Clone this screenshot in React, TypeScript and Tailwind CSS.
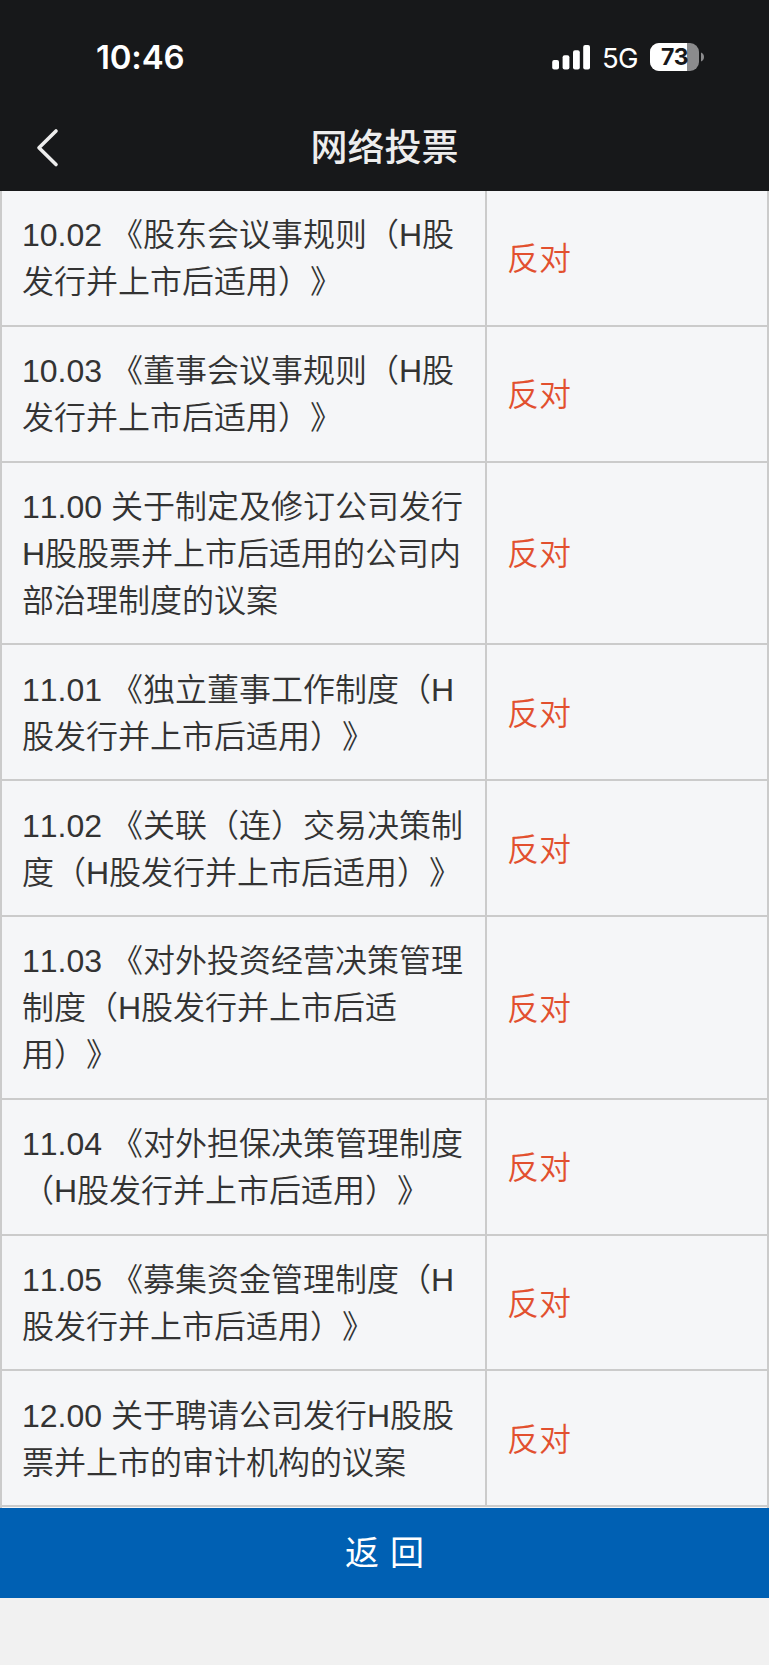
const rows = [
  { lines: ['10.02 《股东会议事规则（H股', '发行并上市后适用）》'], vote: '反对' },
  { lines: ['10.03 《董事会议事规则（H股', '发行并上市后适用）》'], vote: '反对' },
  { lines: ['11.00 关于制定及修订公司发行', 'H股股票并上市后适用的公司内', '部治理制度的议案'], vote: '反对' },
  { lines: ['11.01 《独立董事工作制度（H', '股发行并上市后适用）》'], vote: '反对' },
  { lines: ['11.02 《关联（连）交易决策制', '度（H股发行并上市后适用）》'], vote: '反对' },
  { lines: ['11.03 《对外投资经营决策管理', '制度（H股发行并上市后适', '用）》'], vote: '反对' },
  { lines: ['11.04 《对外担保决策管理制度', '（H股发行并上市后适用）》'], vote: '反对' },
  { lines: ['11.05 《募集资金管理制度（H', '股发行并上市后适用）》'], vote: '反对' },
  { lines: ['12.00 关于聘请公司发行H股股', '票并上市的审计机构的议案'], vote: '反对' },
];

function StatusBar() {
  return (
    <div className="h-[105px] pt-[37px] pl-[96px] pr-[65px] flex justify-between font-['Inter',sans-serif] text-white">
      <span className="h-10 leading-[41px] text-[33px] font-semibold tracking-[-0.2px]">10:46</span>
      <div className="h-10 flex items-center">
        <svg className="w-[39px] h-[26px]" viewBox="0 0 39 26" fill="#fff">
          <rect x="0.2" y="16" width="6.8" height="9.4" rx="2" />
          <rect x="10.6" y="11.3" width="6.8" height="14.1" rx="2" />
          <rect x="21" y="6.2" width="6.8" height="19.2" rx="2" />
          <rect x="31.2" y="1" width="6.8" height="24.4" rx="2" />
        </svg>
        <span className="ml-[11px] w-[37px] text-[27.5px] leading-10 pt-0.5 whitespace-nowrap tracking-[-0.6px]">5G</span>
        <div className="ml-[11px] relative w-[49px] h-7 rounded-[9px] overflow-hidden bg-[#8b8b8d]">
          <div className="w-[36.5px] h-full bg-white" />
          <span className="absolute inset-0 leading-7 text-center text-[23px] font-bold text-[#17181a] tracking-[-0.5px]">73</span>
        </div>
        <svg className="ml-[2px] w-[3px] h-[10px]" viewBox="0 0 3 10" fill="#8b8b8d">
          <path d="M0 0.5C4 2 4 8 0 9.5Z" />
        </svg>
      </div>
    </div>
  );
}

export default function App() {
  return (
    <div lang="zh-CN" className="w-[769px] h-[1665px] overflow-hidden bg-[#f1f1f1] font-['Liberation_Sans','Noto_Sans_CJK_SC',sans-serif] [font-kerning:none] [text-spacing-trim:space-all]">
      <header className="h-[191px] bg-[#17181a]">
        <StatusBar />
        <div className="h-[86px] grid grid-cols-[1fr_auto_1fr] items-center">
          <svg className="ml-[36px] w-6 h-10" viewBox="0 0 24 40" fill="none" stroke="#ededed" strokeWidth="3.6" strokeLinecap="round" strokeLinejoin="round">
            <path d="M20 3L3 19.8L20 36.5" />
          </svg>
          <h1 className="pt-0.5 text-[37px] leading-[50px] font-medium text-[#ededed]">网络投票</h1>
        </div>
      </header>

      <main className="h-[1317px] bg-[#f5f6f8] border-x-2 border-[#cbcbcb]">
        {rows.map((row) => (
          <div
            key={row.lines[0]}
            className={`flex border-b-2 border-[#cbcbcb] font-[350] ${row.lines.length === 3 ? 'h-[182.8px]' : 'h-[135.8px]'}`}
          >
            <div className="w-[485px] pl-5 pt-[3px] flex flex-col justify-center border-r-2 border-[#cbcbcb] text-[32px] leading-[47px] text-[#333]">
              {row.lines.map((line) => (
                <p key={line} className="whitespace-nowrap">{line}</p>
              ))}
            </div>
            <div className="flex-1 pl-5 pt-1 flex items-center text-[32px] leading-[47px] text-[#e2502f]">{row.vote}</div>
          </div>
        ))}
      </main>

      <button className="block w-full h-[90px] bg-[#0060b3] text-[34px] text-white text-center [word-spacing:1.5px]">返 回</button>
    </div>
  );
}
